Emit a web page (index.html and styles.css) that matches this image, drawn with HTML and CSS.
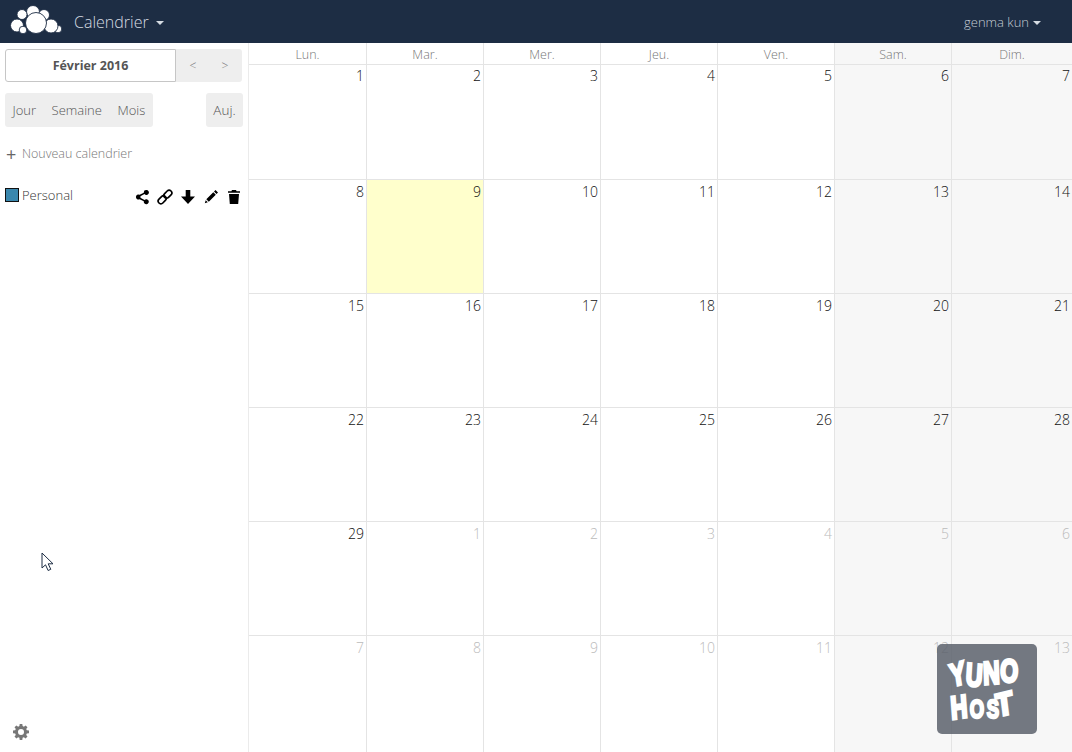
FILE: index.html
```html
<!DOCTYPE html>
<html lang="fr">
<head>
<meta charset="utf-8">
<title>Calendrier</title>
<link rel="stylesheet" href="styles.css">
</head>
<body>
<header class="topbar">
  <svg class="logo" width="54" height="32" viewBox="0 0 54 32"><g fill="#fff" stroke="#1d2d44" stroke-width="0.9"><circle cx="23" cy="8" r="6.500"/><circle cx="12" cy="10.500" r="5"/><circle cx="34" cy="11" r="5.500"/><circle cx="7" cy="21.500" r="6.500"/><circle cx="48" cy="25" r="3.800"/><circle cx="41" cy="22" r="7"/><circle cx="13" cy="26" r="3.800"/><circle cx="26" cy="19" r="10.500"/></g></svg>
  <div class="app-name">Calendrier<span class="caret big"></span></div>
  <div class="user">genma kun<span class="caret"></span></div>
</header>
<div class="main">
  <aside class="sidebar">
    <div class="date-row">
      <button class="date-btn">Février 2016</button>
      <div class="arrows"><span>&lt;</span><span>&gt;</span></div>
    </div>
    <div class="view-row">
      <div class="views"><span>Jour</span><span>Semaine</span><span>Mois</span></div>
      <div class="today-btn">Auj.</div>
    </div>
    <div class="new-cal"><span class="plus">+</span>Nouveau calendrier</div>
    <div class="cal-item">
      <span class="swatch"></span><span class="cal-name">Personal</span>
      <div class="cal-actions">
        <svg width="16" height="16" viewBox="0 0 16 16"><path d="M12.500 1a2.500 2.500 0 1 1-2 4.100L6.400 7.200a2.500 2.500 0 0 1 0 1.600l4.100 2.100a2.500 2.500 0 1 1-.7 1.400L5.600 10.200a2.500 2.500 0 1 1 0-4.400l4.200-2.100A2.500 2.500 0 0 1 12.500 1z"/></svg>
        <svg width="16" height="16" viewBox="0 0 16 16"><g fill="none" stroke="#000" stroke-width="1.700" transform="rotate(-45 8 8)"><rect x="-0.500" y="5.300" width="9" height="5.400" rx="2.700"/><rect x="7.500" y="5.300" width="9" height="5.400" rx="2.700"/></g></svg>
        <svg width="16" height="16" viewBox="0 0 16 16"><path d="M5.700 1h4.600v6.500H15L8 15 1 7.500h4.700z"/></svg>
        <svg width="16" height="16" viewBox="0 0 16 16"><path d="M12.500 1l2.500 2.500-1.500 1.500-2.500-2.500zM10.300 3.200l2.500 2.500-7 7-2.500-2.500zM2.700 11.200l2.100 2.100-3 .9z"/></svg>
        <svg width="16" height="16" viewBox="0 0 16 16"><path d="M6 1h4l.6 1.200H14v1.600H2V2.200h3.400zM3 5h10l-.8 10H3.800z"/></svg>
      </div>
    </div>
    <svg class="gear" width="16" height="16" viewBox="0 0 16 16"><path fill-rule="evenodd" d="M6.700 0h2.600l.3 2.100 1.300.6 1.700-1.300 1.900 1.900-1.300 1.700.6 1.300 2.200.3v2.700l-2.200.3-.6 1.300 1.300 1.700-1.900 1.900-1.700-1.300-1.300.6-.3 2.100H6.700l-.3-2.100-1.300-.6-1.700 1.300-1.900-1.900 1.300-1.700-.6-1.300L0 9.300V6.600l2.200-.3.6-1.300-1.300-1.700 1.900-1.900 1.700 1.300 1.300-.6zM8 5a3 3 0 1 0 0 6 3 3 0 0 0 0-6z"/></svg>
  </aside>
  <section class="calendar">
    <div class="cal-head">Lun.</div><div class="cal-head">Mar.</div><div class="cal-head">Mer.</div><div class="cal-head">Jeu.</div><div class="cal-head">Ven.</div><div class="cal-head we">Sam.</div><div class="cal-head we">Dim.</div>
    <div class="day">1</div><div class="day">2</div><div class="day">3</div><div class="day">4</div><div class="day">5</div><div class="day we">6</div><div class="day we">7</div>
    <div class="day">8</div><div class="day today">9</div><div class="day">10</div><div class="day">11</div><div class="day">12</div><div class="day we">13</div><div class="day we">14</div>
    <div class="day">15</div><div class="day">16</div><div class="day">17</div><div class="day">18</div><div class="day">19</div><div class="day we">20</div><div class="day we">21</div>
    <div class="day">22</div><div class="day">23</div><div class="day">24</div><div class="day">25</div><div class="day">26</div><div class="day we">27</div><div class="day we">28</div>
    <div class="day">29</div><div class="day other">1</div><div class="day other">2</div><div class="day other">3</div><div class="day other">4</div><div class="day other we">5</div><div class="day other we">6</div>
    <div class="day other last">7</div><div class="day other last">8</div><div class="day other last">9</div><div class="day other last">10</div><div class="day other last">11</div><div class="day other we last">12</div><div class="day other we last">13</div>
  </section>
</div>
<svg class="cursor" width="14" height="20" viewBox="0 0 14 20"><path d="M1 1v15l3.500-3.200 2.600 5.700 2.700-1.200-2.600-5.500h4.800z" fill="#fff" stroke="#1d2d44" stroke-width="1"/></svg>
<div class="yuno">
  <div class="yuno-word"><span class="l1">Y</span><span class="l2">U</span><span class="l3">N</span><span class="l4">O</span></div>
  <div class="yuno-word second"><span class="l5">H</span><span class="l6">O</span><span class="l7">S</span><span class="l8">T</span></div>
</div>
</body>
</html>
```
FILE: styles.css
```css
* { box-sizing: border-box; }
html, body { margin: 0; height: 100%; overflow: hidden; }
body {
  width: 1072px;
  height: 752px;
  display: flex;
  flex-direction: column;
  position: relative;
  background: #fff;
  color: #555;
  font-family: "Open Sans", sans-serif;
  font-weight: 300;
  font-size: 14px;
}
.topbar {
  height: 43px;
  flex: none;
  background: #1d2d44;
  display: flex;
  align-items: center;
  color: #d0d6dc;
  padding-left: 10px;
}
.logo { flex: none; margin-top: -3px; }
.app-name { margin-left: 10px; font-size: 16px; font-weight: 300; color: #d5dbe2; }
.user { margin-left: auto; margin-right: 31px; font-size: 13px; color: #c4ccd4; }
.caret {
  display: inline-block;
  margin-left: 4px;
  border-left: 4px solid transparent;
  border-right: 4px solid transparent;
  border-top: 4px solid #d5dbe2;
  vertical-align: middle;
}
.caret.big { margin-left: 7px; }
.main { flex: 1; display: flex; min-height: 0; }
.sidebar {
  width: 249px;
  flex: none;
  border-right: 1px solid #ebebeb;
  padding: 6px 5px 0;
  display: flex;
  flex-direction: column;
  position: relative;
}
.date-row { display: flex; height: 33px; width: 237px; }
.date-btn {
  width: 171px;
  border: 1px solid #c6c6c6;
  border-radius: 3px 0 0 3px;
  background: #fff;
  color: #555;
  font: 700 12.500px "Open Sans", sans-serif;
  padding: 0;
}
.arrows {
  flex: 1;
  background: #eee;
  border-radius: 0 3px 3px 0;
  display: flex;
  justify-content: space-around;
  align-items: center;
  font-size: 12px;
  color: #777;
  padding: 0 1px;
}
.view-row { display: flex; justify-content: space-between; margin-top: 11px; height: 34px; width: 238px; }
.views {
  width: 148px;
  background: #eee;
  border-radius: 3px;
  display: flex;
  align-items: center;
  gap: 15.500px;
  padding: 0 0 0 7.500px;
  font-size: 13px;
  color: #555;
}
.today-btn {
  width: 37px;
  background: #eee;
  border-radius: 3px;
  display: flex;
  align-items: center;
  justify-content: center;
  font-size: 13.500px;
  color: #555;
}
.new-cal { margin-top: 17px; height: 20px; font-size: 12.500px; color: #777; line-height: 20px; display: flex; align-items: center; }
.plus { font-size: 18px; font-weight: 400; color: #666; width: 17px; padding-left: 1px; }
.cal-item { margin-top: 21px; display: flex; align-items: center; height: 20px; color: #333; font-size: 13px; }
.swatch { width: 14px; height: 14px; background: #3a87ad; border: 1px solid #111; margin-right: 3px; margin-top: -1px; }
.cal-actions { margin-left: auto; display: flex; gap: 7px; margin-right: 1px; margin-top: 3px; }
.gear { position: absolute; left: 13px; bottom: 12px; fill: #777; }
.calendar {
  flex: 1;
  display: grid;
  grid-template-columns: 118px repeat(5, 117px) 1fr;
  grid-template-rows: 22px 115px repeat(4, 114px) 1fr;
}
.cal-head {
  border-right: 1px solid #e4e4e4;
  border-bottom: 1px solid #e4e4e4;
  text-align: center;
  font-size: 12.500px;
  line-height: 23px;
  color: #777;
}
.day {
  border-right: 1px solid #e4e4e4;
  border-bottom: 1px solid #e4e4e4;
  text-align: right;
  padding: 2px 2px 0 0;
  font-size: 14px;
  line-height: 19px;
  color: #111;
}
.day:nth-child(-n+14) { padding-top: 1px; }
.we { background: #f7f7f7; }
.today { background: #ffc; }
.other { color: #bbb; }
.last { border-bottom: 0; }
.cal-head:nth-child(7), .day:nth-child(7n) { border-right: 0; }
.cursor { position: absolute; left: 41px; top: 552px; }
.yuno {
  position: absolute;
  left: 937px;
  top: 644px;
  width: 100px;
  height: 90px;
  border-radius: 5px;
  background: rgba(92, 97, 108, 0.85);
  color: #fff;
  font-family: "Liberation Sans", sans-serif;
  font-weight: 700;
  font-size: 32px;
  line-height: 30px;
  -webkit-text-stroke: 3px #fff;
  padding: 15px 0 0 13px;
}
.yuno-word { display: flex; height: 30px; width: 120px; transform: scaleX(.72); transform-origin: left center; }
.yuno-word span { display: block; }
.second { margin-top: 2px; }
.l1 { transform: rotate(-12deg); }
.l2 { transform: translate(1px, 1px) rotate(5deg); }
.l3 { transform: translate(2px, -1px) rotate(-3deg); }
.l4 { transform: translate(2px, -3px) rotate(4deg); }
.l5 { transform: translate(1px, 1px) rotate(-6deg); }
.l6 { transform: translate(2px, 3px) scale(.8); }
.l7 { transform: translate(1px, 3px) scale(.8); }
.l8 { transform: translate(-3px, -2px) rotate(-10deg) scaleX(1.2); }
```
